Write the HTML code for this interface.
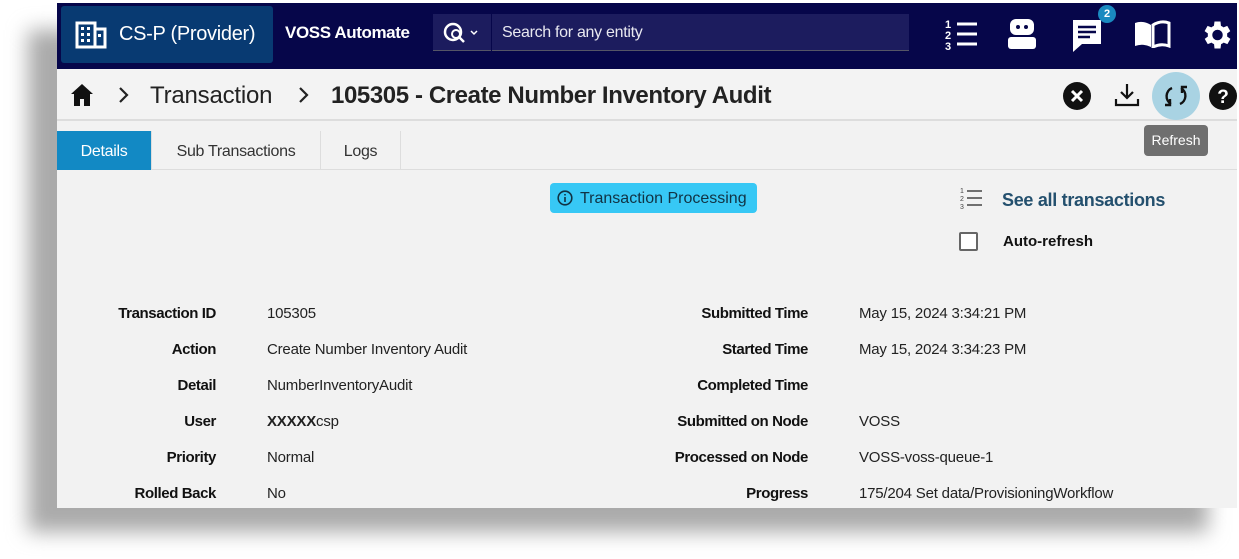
<!DOCTYPE html>
<html><head><meta charset="utf-8"><style>
*{margin:0;padding:0;box-sizing:border-box}
body{width:1239px;height:559px;background:#fff;font-family:"Liberation Sans",sans-serif;position:relative;overflow:hidden}
.shadow{position:absolute;left:28px;top:30px;width:1180px;height:502px;background:#aaa;filter:blur(10px)}
.page{position:absolute;left:57px;top:3px;width:1180px;height:505px;background:#f2f2f2;overflow:hidden}
.nav{position:absolute;left:0;top:0;width:100%;height:66px;background:#06064a}
.prov{position:absolute;left:4px;top:3px;width:212px;height:57px;background:#083a72;border-radius:3px;color:#fff;font-size:20px;line-height:57px;padding-left:58px;letter-spacing:-0.3px}
.voss{position:absolute;left:228px;top:20px;color:#fff;font-weight:bold;font-size:17px;letter-spacing:-0.4px}
.sbox{position:absolute;left:376px;top:11px;width:476px;height:37px;background:#1c1c5e;border-bottom:1px solid #556}
.sbox .div{position:absolute;left:58px;top:0;width:1px;height:37px;background:#06064a}
.sbox span{position:absolute;left:69px;top:10px;color:#e8e8f0;font-size:16px;letter-spacing:-0.3px}
.crumb{position:absolute;left:0;top:66px;width:100%;height:52px;background:#f3f3f3;border-bottom:2px solid #ddd}
.crumb .t{position:absolute;top:13px;font-size:24px;color:#222}
.tabs{position:absolute;top:128px;left:0;height:39px;width:100%;border-bottom:1px solid #ddd}
.tab{position:absolute;top:0;height:39px;line-height:41px;font-size:16px;color:#333;text-align:center;border-right:1px solid #ddd;letter-spacing:-0.3px}
.badge{position:absolute;left:493px;top:180px;width:207px;height:30px;background:#37c8f5;border-radius:4px;font-size:16px;color:#134;line-height:31px;padding-left:30px}
.lab{position:absolute;font-weight:bold;font-size:15px;color:#111;text-align:right;letter-spacing:-0.4px}
.val{position:absolute;font-size:15px;color:#222;letter-spacing:-0.2px}
</style></head><body>
<div class="shadow"></div>
<div class="page">
 <div class="nav">
  <div class="prov">CS-P (Provider)
   <svg style="position:absolute;left:14px;top:15px" width="32" height="28" viewBox="0 0 32 28"><rect x="2" y="2" width="18" height="24" fill="none" stroke="#fff" stroke-width="3"/><rect x="20" y="8" width="10" height="18" fill="none" stroke="#fff" stroke-width="3"/><g fill="#fff"><rect x="6" y="6" width="3" height="3"/><rect x="12" y="6" width="3" height="3"/><rect x="6" y="12" width="3" height="3"/><rect x="12" y="12" width="3" height="3"/><rect x="6" y="18" width="3" height="3"/><rect x="12" y="18" width="3" height="3"/><rect x="23" y="13" width="3" height="3"/></g></svg>
  </div>
  <div class="voss">VOSS Automate</div>
  <div class="sbox"><div class="div"></div>
   <svg style="position:absolute;left:10px;top:8px" width="40" height="22" viewBox="0 0 40 22"><circle cx="10" cy="10" r="8" fill="none" stroke="#fff" stroke-width="2.5"/><circle cx="13" cy="12" r="4" fill="none" stroke="#fff" stroke-width="2"/><path d="M16 15l5 5" stroke="#fff" stroke-width="2.5"/><path d="M28 9l3 3 3-3" fill="none" stroke="#fff" stroke-width="1.5"/></svg>
   <span>Search for any entity</span></div>
  <svg style="position:absolute;left:888px;top:14px" width="36" height="34" viewBox="0 0 36 34"><text x="0" y="11" fill="#fff" font-size="11" font-weight="bold" font-family="Liberation Sans">1</text><text x="0" y="22" fill="#fff" font-size="11" font-weight="bold" font-family="Liberation Sans">2</text><text x="0" y="33" fill="#fff" font-size="11" font-weight="bold" font-family="Liberation Sans">3</text><g stroke="#fff" stroke-width="3"><path d="M12 7h20M12 17h20M12 27h20"/></g></svg>
  <svg style="position:absolute;left:950px;top:14px" width="30" height="34" viewBox="0 0 30 34"><rect x="3" y="2" width="24" height="16" rx="6" fill="#fff"/><circle cx="11" cy="10" r="2" fill="#06064a"/><circle cx="19" cy="10" r="2" fill="#06064a"/><rect x="1" y="20" width="28" height="12" rx="3" fill="#fff"/></svg>
  <svg style="position:absolute;left:1013px;top:14px" width="36" height="36" viewBox="0 0 36 36"><path d="M3 3h28v24H12l-9 8z" fill="#fff"/><g stroke="#06064a" stroke-width="2.5"><path d="M8 10h18M8 15h18M8 20h12"/></g></svg>
  <div style="position:absolute;left:1041px;top:2px;width:18px;height:18px;border-radius:50%;background:#1a8ac0;color:#fff;font-size:11px;font-weight:bold;text-align:center;line-height:18px">2</div>
  <svg style="position:absolute;left:1076px;top:17px" width="38" height="28" viewBox="0 0 38 28"><path d="M2 3q8-3 16 2v22q-8-4-16-1z" fill="#fff"/><path d="M20 5q8-5 16-2v23q-8-3-16 1z" fill="none" stroke="#fff" stroke-width="3"/></svg>
  <svg style="position:absolute;left:1141px;top:14px" width="36" height="36" viewBox="0 0 24 24"><path fill="#fff" d="M19.4 13a7.5 7.5 0 000-2l2.1-1.6-2-3.5-2.5 1a7.8 7.8 0 00-1.7-1L15 3h-4l-.4 2.9a7.8 7.8 0 00-1.7 1l-2.5-1-2 3.5L6.6 11a7.5 7.5 0 000 2l-2.1 1.6 2 3.5 2.5-1a7.8 7.8 0 001.7 1L11 21h4l.4-2.9a7.8 7.8 0 001.7-1l2.5 1 2-3.5zM13 15.5a3.5 3.5 0 110-7 3.5 3.5 0 010 7z"/></svg>
 </div>
 <div class="crumb">
  <svg style="position:absolute;left:13px;top:14px" width="24" height="24" viewBox="0 0 24 24"><path d="M12 1L1 11h3v12h6v-7h4v7h6V11h3z" fill="#111"/></svg>
  <svg style="position:absolute;left:60px;top:17px" width="14" height="18" viewBox="0 0 14 18"><path d="M3 2l7 7-7 7" fill="none" stroke="#222" stroke-width="2.2"/></svg>
  <div class="t" style="left:93px;letter-spacing:-0.2px">Transaction</div>
  <svg style="position:absolute;left:240px;top:17px" width="14" height="18" viewBox="0 0 14 18"><path d="M3 2l7 7-7 7" fill="none" stroke="#222" stroke-width="2.2"/></svg>
  <div class="t" style="left:274px;font-weight:bold;letter-spacing:-0.4px">105305 - Create Number Inventory Audit</div>
  <svg style="position:absolute;left:1006px;top:13px" width="28" height="28" viewBox="0 0 28 28"><circle cx="14" cy="14" r="14" fill="#111"/><path d="M9 9l10 10M19 9l-10 10" stroke="#fff" stroke-width="3"/></svg>
  <svg style="position:absolute;left:1057px;top:13px" width="26" height="26" viewBox="0 0 26 26"><path d="M13 2v14M7 10l6 6 6-6M2 17v6h22v-6" fill="none" stroke="#111" stroke-width="2.2"/></svg>
  <div style="position:absolute;left:1095px;top:3px;width:48px;height:48px;border-radius:50%;background:#a9d3e3"></div>
  <svg style="position:absolute;left:1105px;top:13px" width="28" height="28" viewBox="0 0 28 28"><path d="M10 6a9 9 0 00-1 16M8 17v6h-5M18 22a9 9 0 001-16M20 11V5h5" fill="none" stroke="#111" stroke-width="2.4"/></svg>
  <svg style="position:absolute;left:1152px;top:13px" width="28" height="28" viewBox="0 0 28 28"><circle cx="14" cy="14" r="14" fill="#111"/><text x="14" y="21" fill="#fff" font-size="19" font-weight="bold" text-anchor="middle" font-family="Liberation Sans">?</text></svg>
 </div>
 <div style="position:absolute;left:1087px;top:122px;width:64px;height:31px;background:#6f6f6f;border-radius:4px;color:#fff;font-size:14px;text-align:center;line-height:31px;z-index:3">Refresh</div>
 <div class="tabs">
  <div class="tab" style="left:0;width:95px;background:#1289c4;color:#fff">Details</div>
  <div class="tab" style="left:95px;width:169px">Sub Transactions</div>
  <div class="tab" style="left:264px;width:80px">Logs</div>
 </div>
 <div class="badge"><svg style="position:absolute;left:7px;top:7px" width="16" height="16" viewBox="0 0 16 16"><circle cx="8" cy="8" r="6.8" fill="none" stroke="#134" stroke-width="1.6"/><path d="M8 7v5M8 4v1.5" stroke="#134" stroke-width="1.6"/></svg>Transaction Processing</div>
 <svg style="position:absolute;left:903px;top:183px" width="24" height="24" viewBox="0 0 24 24"><text x="0" y="7" fill="#444" font-size="7" font-family="Liberation Sans">1</text><text x="0" y="15" fill="#444" font-size="7" font-family="Liberation Sans">2</text><text x="0" y="23" fill="#444" font-size="7" font-family="Liberation Sans">3</text><g stroke="#444" stroke-width="1.6"><path d="M7 5h15M7 12h15M7 19h15"/></g></svg>
 <div style="position:absolute;left:945px;top:187px;font-size:18px;font-weight:bold;color:#24506e;letter-spacing:-0.3px">See all transactions</div>
 <div style="position:absolute;left:902px;top:229px;width:19px;height:19px;border:2px solid #666;border-radius:2px;background:#fff"></div>
 <div style="position:absolute;left:946px;top:230px;font-size:15px;font-weight:bold;color:#111">Auto-refresh</div>

 <div class="lab" style="right:1021px;top:302px">Transaction ID</div><div class="val" style="left:210px;top:302px">105305</div>
 <div class="lab" style="right:1021px;top:338px">Action</div><div class="val" style="left:210px;top:338px">Create Number Inventory Audit</div>
 <div class="lab" style="right:1021px;top:374px">Detail</div><div class="val" style="left:210px;top:374px">NumberInventoryAudit</div>
 <div class="lab" style="right:1021px;top:410px">User</div><div class="val" style="left:210px;top:410px"><b>XXXXX</b>csp</div>
 <div class="lab" style="right:1021px;top:446px">Priority</div><div class="val" style="left:210px;top:446px">Normal</div>
 <div class="lab" style="right:1021px;top:482px">Rolled Back</div><div class="val" style="left:210px;top:482px">No</div>

 <div class="lab" style="right:429px;top:302px">Submitted Time</div><div class="val" style="left:802px;top:302px">May 15, 2024 3:34:21 PM</div>
 <div class="lab" style="right:429px;top:338px">Started Time</div><div class="val" style="left:802px;top:338px">May 15, 2024 3:34:23 PM</div>
 <div class="lab" style="right:429px;top:374px">Completed Time</div>
 <div class="lab" style="right:429px;top:410px">Submitted on Node</div><div class="val" style="left:802px;top:410px">VOSS</div>
 <div class="lab" style="right:429px;top:446px">Processed on Node</div><div class="val" style="left:802px;top:446px">VOSS-voss-queue-1</div>
 <div class="lab" style="right:429px;top:482px">Progress</div><div class="val" style="left:802px;top:482px">175/204 Set data/ProvisioningWorkflow</div>
</div>
</body></html>
